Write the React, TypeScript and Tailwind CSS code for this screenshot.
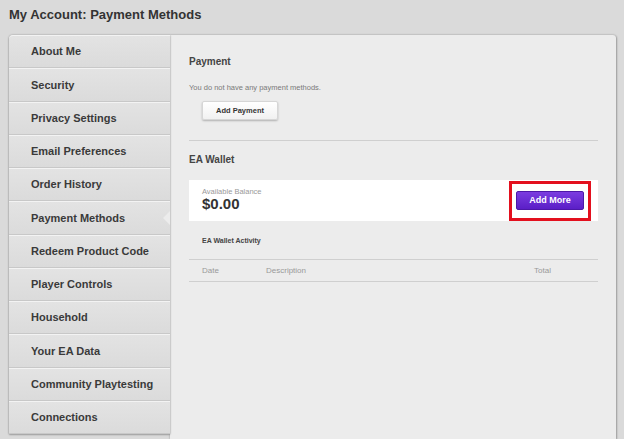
import React from "react";

const items = [
  "About Me",
  "Security",
  "Privacy Settings",
  "Email Preferences",
  "Order History",
  "Payment Methods",
  "Redeem Product Code",
  "Player Controls",
  "Household",
  "Your EA Data",
  "Community Playtesting",
  "Connections",
];

export default function App() {
  return (
    <div className="w-[624px] h-[439px] bg-[#dadada] overflow-hidden font-['Liberation_Sans',Arial,sans-serif] text-[#333]">
      <div className="h-[35px] pl-[9px] pt-[7px] text-[13px] leading-[16px] font-bold text-[#333]">
        My Account: Payment Methods
      </div>
      <div className="ml-[9px] w-[607px] h-[404px] flex">
        <div className="w-[161px] flex flex-col self-start rounded-tl-[4px] shadow-[0_0_2px_rgba(0,0,0,0.35),0_1px_2px_rgba(0,0,0,0.2)] z-10">
          {items.map((it, i) => (
            <div
              key={it}
              className={
                "relative h-[33.25px] flex items-center pl-[22px] text-[11px] font-bold text-[#3a3a3a] bg-gradient-to-b from-[#e3e3e3] to-[#dbdbdb] border-t border-t-[#f3f3f3] border-b border-b-[#c8c8c8]" +
                (i === 0 ? " rounded-tl-[4px]" : "")
              }
            >
              {it}
              {it === "Payment Methods" && (
                <div className="absolute right-0 top-1/2 -translate-y-1/2 w-0 h-0 border-y-[7px] border-y-transparent border-r-[7px] border-r-[#ececec]" />
              )}
            </div>
          ))}
        </div>
        <div className="flex-1 bg-[#ececec] pl-[19px] pr-[18px] rounded-tr-[3px] shadow-[0_0_2px_rgba(0,0,0,0.35),1px_1px_2px_rgba(0,0,0,0.2)]">
          <div className="pt-[21px] text-[10px] leading-[12px] font-bold text-[#444]">Payment</div>
          <div className="mt-[15px] text-[7.5px] leading-[9px] text-[#7a7a7a]">You do not have any payment methods.</div>
          <button className="mt-[9px] ml-[13px] w-[76px] h-[19px] rounded-[2px] bg-gradient-to-b from-white to-[#f1f1f1] border border-[#d6d6d6] shadow-[0_1px_2px_rgba(0,0,0,0.25)] text-[7.5px] font-bold text-[#333]">
            Add Payment
          </button>
          <div className="mt-[20px] h-px bg-[#cfcfcf]" />
          <div className="mt-[13px] text-[10px] leading-[12px] font-bold text-[#444]">EA Wallet</div>
          <div className="mt-[14px] h-[41px] bg-white flex items-center justify-between pl-[13px]">
            <div className="flex flex-col">
              <span className="text-[7.5px] leading-[9px] text-[#9a9a9a] mt-[-3px]">Available Balance</span>
              <span className="text-[15px] leading-[15px] font-bold text-[#333]">$0.00</span>
            </div>
            <div className="mr-[7px] w-[82px] h-[40px] border-[3px] border-[#e3101e] flex items-center justify-center">
              <button className="w-[68px] h-[19px] rounded-[2px] bg-gradient-to-b from-[#7b3be0] to-[#5b1ec7] border border-[#4d18a8] text-white text-[9px] font-bold">
                Add More
              </button>
            </div>
          </div>
          <div className="mt-[15px] pl-[13px] text-[7px] leading-[9px] font-bold text-[#444]">EA Wallet Activity</div>
          <div className="mt-[14px] h-px bg-[#cfcfcf]" />
          <div className="h-[21px] flex items-center text-[8px] text-[#999]">
            <span className="ml-[13px] w-[64px]">Date</span>
            <span className="flex-1">Description</span>
            <span className="mr-[47px]">Total</span>
          </div>
          <div className="h-px bg-[#cfcfcf]" />
        </div>
      </div>
    </div>
  );
}
